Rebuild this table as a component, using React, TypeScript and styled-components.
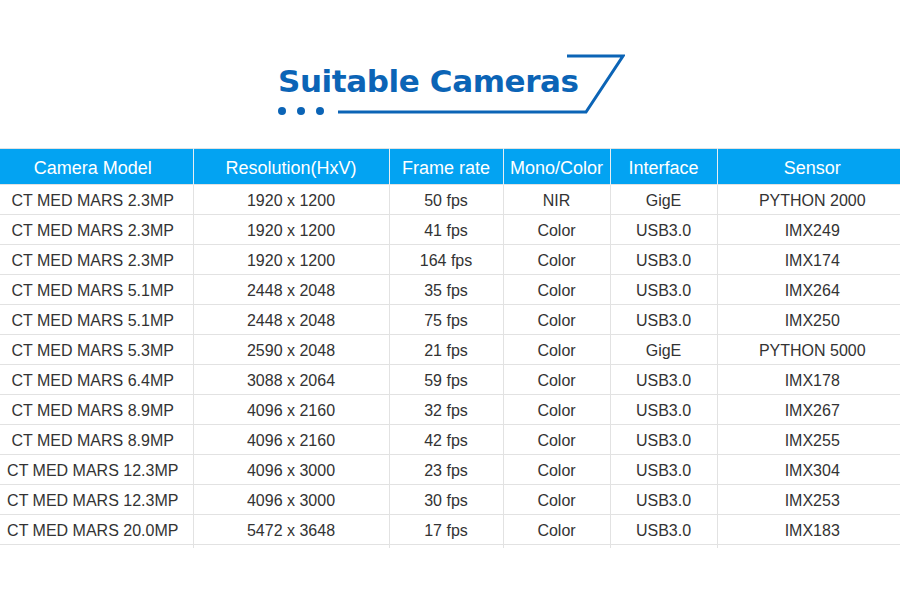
import React from 'react';
import styled, { createGlobalStyle } from 'styled-components';

const GlobalStyle = createGlobalStyle`
  html, body {
    margin: 0;
    padding: 0;
    background: #fff;
  }
  body {
    font-family: "Liberation Sans", Arial, sans-serif;
  }
`;

const Page = styled.main`
  width: 900px;
  height: 592px;
  overflow: hidden;
  background: #fff;
`;

const Heading = styled.div`
  position: relative;
  width: 350px;
  height: 70px;
  margin: 50px auto 28px;
`;

const HeadingText = styled.h1`
  margin: 0;
  padding: 14px 0 0 3px;
  font-family: "DejaVu Sans", "Open Sans", sans-serif;
  font-weight: 700;
  font-size: 31px;
  line-height: 34px;
  letter-spacing: -0.4px;
  color: #0b64b6;
`;

const Decoration = styled.svg`
  position: absolute;
  inset: 0;
  pointer-events: none;
`;

// the table is a little wider than the page and overflows on both sides
const Table = styled.table`
  width: 914px;
  margin-left: -7px;
  border-collapse: collapse;
  table-layout: fixed;
  border-top: 1px solid #e2e2e2;
`;

const Th = styled.th`
  height: 32px;
  padding: 3px 0 0;
  background: #03a3f2;
  color: #fff;
  font-weight: 400;
  font-size: 18px;
  text-align: center;
  white-space: nowrap;
  border-left: 1px solid #e6eef3;
  &:first-child {
    border-left: none;
  }
`;

const Td = styled.td`
  height: 27px;
  padding: 2px 0 0;
  color: #333;
  font-size: 16px;
  text-align: center;
  white-space: nowrap;
  border-top: 1px solid #e2e2e2;
  border-left: 1px solid #e2e2e2;
  &:first-child {
    border-left: none;
  }
`;

const TailCell = styled.td`
  height: 3px;
  padding: 0;
  border-top: 1px solid #e2e2e2;
  border-left: 1px solid #e2e2e2;
  &:first-child {
    border-left: none;
  }
`;

const columns = [
  { title: 'Camera Model', w: '200px' },
  { title: 'Resolution(HxV)', w: '196px' },
  { title: 'Frame rate', w: '114px' },
  { title: 'Mono/Color', w: '107px' },
  { title: 'Interface', w: '107px' },
  { title: 'Sensor', w: 'auto' },
];

const cameras = [
  ['CT MED MARS 2.3MP', '1920 x 1200', '50 fps', 'NIR', 'GigE', 'PYTHON 2000'],
  ['CT MED MARS 2.3MP', '1920 x 1200', '41 fps', 'Color', 'USB3.0', 'IMX249'],
  ['CT MED MARS 2.3MP', '1920 x 1200', '164 fps', 'Color', 'USB3.0', 'IMX174'],
  ['CT MED MARS 5.1MP', '2448 x 2048', '35 fps', 'Color', 'USB3.0', 'IMX264'],
  ['CT MED MARS 5.1MP', '2448 x 2048', '75 fps', 'Color', 'USB3.0', 'IMX250'],
  ['CT MED MARS 5.3MP', '2590 x 2048', '21 fps', 'Color', 'GigE', 'PYTHON 5000'],
  ['CT MED MARS 6.4MP', '3088 x 2064', '59 fps', 'Color', 'USB3.0', 'IMX178'],
  ['CT MED MARS 8.9MP', '4096 x 2160', '32 fps', 'Color', 'USB3.0', 'IMX267'],
  ['CT MED MARS 8.9MP', '4096 x 2160', '42 fps', 'Color', 'USB3.0', 'IMX255'],
  ['CT MED MARS 12.3MP', '4096 x 3000', '23 fps', 'Color', 'USB3.0', 'IMX304'],
  ['CT MED MARS 12.3MP', '4096 x 3000', '30 fps', 'Color', 'USB3.0', 'IMX253'],
  ['CT MED MARS 20.0MP', '5472 x 3648', '17 fps', 'Color', 'USB3.0', 'IMX183'],
];

const App = () => (
  <Page>
    <GlobalStyle />
    <Heading>
      <HeadingText>Suitable Cameras</HeadingText>
      <Decoration width="350" height="70" viewBox="0 0 350 70">
        <polyline
          points="292,6 348,6 311,62 63,62"
          fill="none"
          stroke="#0b64b6"
          strokeWidth="3"
        />
        <circle cx="7" cy="61" r="4" fill="#0b64b6" />
        <circle cx="26" cy="61" r="4" fill="#0b64b6" />
        <circle cx="45" cy="61" r="4" fill="#0b64b6" />
      </Decoration>
    </Heading>
    <Table>
      <colgroup>
        {columns.map((c) => (
          <col key={c.title} style={{ width: c.w }} />
        ))}
      </colgroup>
      <thead>
        <tr>
          {columns.map((c) => (
            <Th key={c.title}>{c.title}</Th>
          ))}
        </tr>
      </thead>
      <tbody>
        {cameras.map((row, i) => (
          <tr key={i}>
            {row.map((v, j) => (
              <Td key={j}>{v}</Td>
            ))}
          </tr>
        ))}
        <tr>
          {columns.map((c) => (
            <TailCell key={c.title} />
          ))}
        </tr>
      </tbody>
    </Table>
  </Page>
);

export default App;
